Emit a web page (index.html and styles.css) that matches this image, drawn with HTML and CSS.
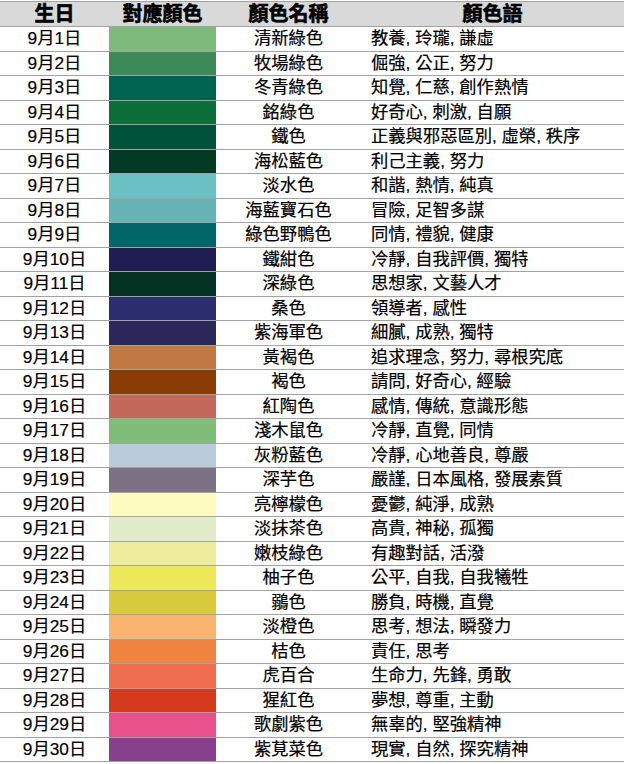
FILE: index.html
```html
<!DOCTYPE html>
<html lang="zh-Hant">
<head>
<meta charset="utf-8">
<title>9月誕生色</title>
<link rel="stylesheet" href="styles.css">
</head>
<body>
<div class="table">
  <div class="row head">
    <div class="cell">生日</div>
    <div class="cell">對應顏色</div>
    <div class="cell">顏色名稱</div>
    <div class="cell">顏色語</div>
  </div>
  <div class="row"><div class="cell date">9月1日</div><div class="swatch" style="background:#7eba7c"></div><div class="cell name">清新綠色</div><div class="cell words">教養, 玲瓏, 謙虛</div></div>
  <div class="row"><div class="cell date">9月2日</div><div class="swatch" style="background:#3b8a58"></div><div class="cell name">牧場綠色</div><div class="cell words">倔強, 公正, 努力</div></div>
  <div class="row"><div class="cell date">9月3日</div><div class="swatch" style="background:#00634f"></div><div class="cell name">冬青綠色</div><div class="cell words">知覺, 仁慈, 創作熱情</div></div>
  <div class="row"><div class="cell date">9月4日</div><div class="swatch" style="background:#0c6e39"></div><div class="cell name">銘綠色</div><div class="cell words">好奇心, 刺激, 自願</div></div>
  <div class="row"><div class="cell date">9月5日</div><div class="swatch" style="background:#00533a"></div><div class="cell name">鐵色</div><div class="cell words">正義與邪惡區別, 虛榮, 秩序</div></div>
  <div class="row"><div class="cell date">9月6日</div><div class="swatch" style="background:#013a24"></div><div class="cell name">海松藍色</div><div class="cell words">利己主義, 努力</div></div>
  <div class="row"><div class="cell date">9月7日</div><div class="swatch" style="background:#6bc0c3"></div><div class="cell name">淡水色</div><div class="cell words">和諧, 熱情, 純真</div></div>
  <div class="row"><div class="cell date">9月8日</div><div class="swatch" style="background:#66b2b4"></div><div class="cell name">海藍寶石色</div><div class="cell words">冒險, 足智多謀</div></div>
  <div class="row"><div class="cell date">9月9日</div><div class="swatch" style="background:#00666a"></div><div class="cell name">綠色野鴨色</div><div class="cell words">同情, 禮貌, 健康</div></div>
  <div class="row"><div class="cell date">9月10日</div><div class="swatch" style="background:#1f1d52"></div><div class="cell name">鐵紺色</div><div class="cell words">冷靜, 自我評價, 獨特</div></div>
  <div class="row"><div class="cell date">9月11日</div><div class="swatch" style="background:#053323"></div><div class="cell name">深綠色</div><div class="cell words">思想家, 文藝人才</div></div>
  <div class="row"><div class="cell date">9月12日</div><div class="swatch" style="background:#2c2d6e"></div><div class="cell name">桑色</div><div class="cell words">領導者, 感性</div></div>
  <div class="row"><div class="cell date">9月13日</div><div class="swatch" style="background:#2b2859"></div><div class="cell name">紫海軍色</div><div class="cell words">細膩, 成熟, 獨特</div></div>
  <div class="row"><div class="cell date">9月14日</div><div class="swatch" style="background:#c07943"></div><div class="cell name">黃褐色</div><div class="cell words">追求理念, 努力, 尋根究底</div></div>
  <div class="row"><div class="cell date">9月15日</div><div class="swatch" style="background:#8a3c05"></div><div class="cell name">褐色</div><div class="cell words">請問, 好奇心, 經驗</div></div>
  <div class="row"><div class="cell date">9月16日</div><div class="swatch" style="background:#c2695a"></div><div class="cell name">紅陶色</div><div class="cell words">感情, 傳統, 意識形態</div></div>
  <div class="row"><div class="cell date">9月17日</div><div class="swatch" style="background:#80bd79"></div><div class="cell name">淺木鼠色</div><div class="cell words">冷靜, 直覺, 同情</div></div>
  <div class="row"><div class="cell date">9月18日</div><div class="swatch" style="background:#b9cbda"></div><div class="cell name">灰粉藍色</div><div class="cell words">冷靜, 心地善良, 尊嚴</div></div>
  <div class="row"><div class="cell date">9月19日</div><div class="swatch" style="background:#7b7385"></div><div class="cell name">深芋色</div><div class="cell words">嚴謹, 日本風格, 發展素質</div></div>
  <div class="row"><div class="cell date">9月20日</div><div class="swatch" style="background:#fdfbbf"></div><div class="cell name">亮檸檬色</div><div class="cell words">憂鬱, 純淨, 成熟</div></div>
  <div class="row"><div class="cell date">9月21日</div><div class="swatch" style="background:#e3ecca"></div><div class="cell name">淡抹茶色</div><div class="cell words">高貴, 神秘, 孤獨</div></div>
  <div class="row"><div class="cell date">9月22日</div><div class="swatch" style="background:#eeec9d"></div><div class="cell name">嫩枝綠色</div><div class="cell words">有趣對話, 活潑</div></div>
  <div class="row"><div class="cell date">9月23日</div><div class="swatch" style="background:#efe85b"></div><div class="cell name">柚子色</div><div class="cell words">公平, 自我, 自我犧牲</div></div>
  <div class="row"><div class="cell date">9月24日</div><div class="swatch" style="background:#d8ca3a"></div><div class="cell name">鶸色</div><div class="cell words">勝負, 時機, 直覺</div></div>
  <div class="row"><div class="cell date">9月25日</div><div class="swatch" style="background:#fbb46f"></div><div class="cell name">淡橙色</div><div class="cell words">思考, 想法, 瞬發力</div></div>
  <div class="row"><div class="cell date">9月26日</div><div class="swatch" style="background:#f08340"></div><div class="cell name">桔色</div><div class="cell words">責任, 思考</div></div>
  <div class="row"><div class="cell date">9月27日</div><div class="swatch" style="background:#ee6c50"></div><div class="cell name">虎百合</div><div class="cell words">生命力, 先鋒, 勇敢</div></div>
  <div class="row"><div class="cell date">9月28日</div><div class="swatch" style="background:#d5391e"></div><div class="cell name">猩紅色</div><div class="cell words">夢想, 尊重, 主動</div></div>
  <div class="row"><div class="cell date">9月29日</div><div class="swatch" style="background:#e8518a"></div><div class="cell name">歌劇紫色</div><div class="cell words">無辜的, 堅強精神</div></div>
  <div class="row"><div class="cell date">9月30日</div><div class="swatch" style="background:#87408e"></div><div class="cell name">紫莧菜色</div><div class="cell words">現實, 自然, 探究精神</div></div>
</div>
</body>
</html>
```

FILE: styles.css
```css
html, body {
  margin: 0;
  padding: 0;
  background: #ffffff;
}

body {
  padding-top: 1px;
  font-family: "Liberation Sans", "Noto Sans CJK TC", sans-serif;
  color: #000000;
}

.table {
  width: 624px;
  display: flex;
  flex-direction: column;
}

.row {
  display: grid;
  grid-template-columns: 109px 107px 145px 1fr;
  height: 24.5px;
  border-bottom: 1px solid #a3a3a3;
  box-sizing: border-box;
}

.row.head {
  height: 26px;
  background: #d9d9d9;
  border-top: 1px solid #a3a3a3;
}

.cell {
  display: flex;
  align-items: center;
  justify-content: center;
  font-size: 17.3px;
  line-height: 1;
  white-space: nowrap;
  -webkit-text-stroke: 0.2px #000000;
}

.head .cell {
  font-size: 20px;
  font-weight: 700;
  -webkit-text-stroke: 0.6px #000000;
}

.words {
  justify-content: flex-start;
  padding-left: 10px;
}

.head .cell:last-child {
  justify-content: center;
  padding-left: 0;
}

.swatch {
  height: 100%;
}
```
